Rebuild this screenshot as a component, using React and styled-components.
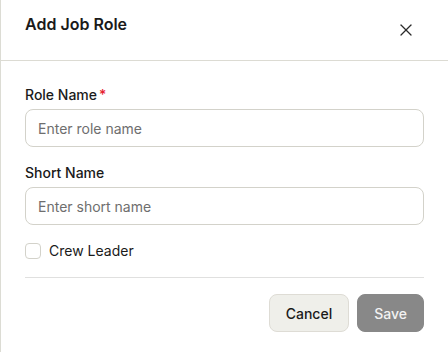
import React from "react";
import styled, { createGlobalStyle } from "styled-components";
import { X } from "lucide-react";

const Global = createGlobalStyle`
  html, body { margin: 0; padding: 0; background: #ffffff; }
  body { font-family: Inter, "Noto Sans", sans-serif; color: #1a1a1a; }
  * { box-sizing: border-box; }
`;

const Dialog = styled.div`
  width: 448px;
  height: 352px;
  background: #ffffff;
  border-left: 1px solid #dcdcd4;
  display: flex;
  flex-direction: column;
`;

const Header = styled.div`
  height: 61px;
  padding: 12px 24px;
  border-bottom: 1px solid #dcdbd3;
  display: flex;
  justify-content: space-between;
  align-items: flex-start;
`;

const Title = styled.h2`
  margin: 0;
  font-size: 16px;
  line-height: 24px;
  font-weight: 600;
  color: #1a1a1a;
`;

const CloseButton = styled.button`
  width: 28px;
  height: 28px;
  margin-top: 4px;
  margin-right: 4px;
  padding: 0;
  border: none;
  background: transparent;
  display: flex;
  align-items: center;
  justify-content: center;
  color: #2b2b2b;
  cursor: pointer;
`;

const Body = styled.div`
  padding: 24px 24px 20px;
  display: flex;
  flex-direction: column;
`;

const Field = styled.div`
  display: flex;
  flex-direction: column;
  gap: 4px;
  margin-bottom: 16px;
`;

const Label = styled.label`
  font-size: 14px;
  line-height: 20px;
  font-weight: 500;
  color: #1a1a1a;
`;

const Required = styled.span`
  color: #e5202e;
  margin-left: 2px;
`;

const Input = styled.input`
  height: 38px;
  width: 100%;
  padding: 0 12px;
  border: 1px solid #d3d2ca;
  border-radius: 8px;
  font-family: Inter, "Noto Sans", sans-serif;
  font-size: 14px;
  color: #1a1a1a;
  background: #ffffff;
  outline: none;
  &::placeholder { color: #6e6e6e; }
`;

const CheckRow = styled.label`
  display: flex;
  align-items: center;
  gap: 8px;
  height: 20px;
  font-size: 14px;
  line-height: 20px;
  color: #1a1a1a;
`;

const CheckBox = styled.span`
  width: 16px;
  height: 16px;
  border: 1px solid #d3d2ca;
  border-radius: 4px;
  background: #ffffff;
`;

const Footer = styled.div`
  margin-top: 16px;
  padding-top: 16px;
  border-top: 1px solid #e0e0df;
  display: flex;
  justify-content: flex-end;
  gap: 8px;
`;

const Button = styled.button`
  height: 38px;
  padding: 0 16px;
  border-radius: 8px;
  font-family: Inter, "Noto Sans", sans-serif;
  font-size: 14px;
  font-weight: 500;
  border: 1px solid ${(p) => (p.$primary ? "#888888" : "#dedcd5")};
  background: ${(p) => (p.$primary ? "#888888" : "#efefea")};
  color: ${(p) => (p.$primary ? "#f2f2f2" : "#1a1a1a")};
`;

export default function App() {
  return (
    <>
      <Global />
      <Dialog>
        <Header>
          <Title>Add Job Role</Title>
          <CloseButton aria-label="Close">
            <X size={20} strokeWidth={1.5} />
          </CloseButton>
        </Header>
        <Body>
          <Field>
            <Label>
              Role Name<Required>*</Required>
            </Label>
            <Input placeholder="Enter role name" />
          </Field>
          <Field>
            <Label>Short Name</Label>
            <Input placeholder="Enter short name" />
          </Field>
          <CheckRow>
            <CheckBox />
            Crew Leader
          </CheckRow>
          <Footer>
            <Button>Cancel</Button>
            <Button $primary>Save</Button>
          </Footer>
        </Body>
      </Dialog>
    </>
  );
}
